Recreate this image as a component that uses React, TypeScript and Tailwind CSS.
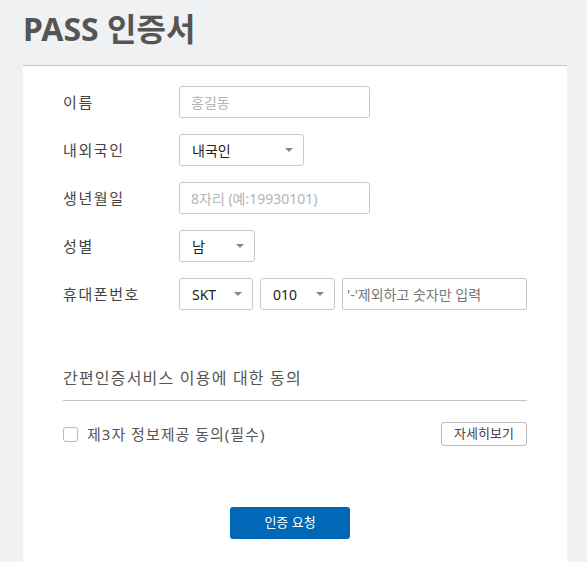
const font = { fontFamily: '"Noto Sans", "Noto Sans CJK KR", sans-serif' };

function Caret() {
  return (
    <span className="ml-auto h-0 w-0 border-x-[4px] border-t-[4px] border-x-transparent border-t-[#888]" />
  );
}

function Select({ value, width }: { value: string; width: string }) {
  return (
    <div
      className={`flex h-[32px] ${width} shrink-0 items-center rounded-[3px] border border-[#c8c8cc] bg-white pl-[12px] pr-[10px] text-[14px] text-[#222]`}
    >
      <span>{value}</span>
      <Caret />
    </div>
  );
}

function TextInput({ placeholder, width }: { placeholder: string; width: string }) {
  return (
    <input
      placeholder={placeholder}
      className={`h-[32px] ${width} shrink-0 rounded-[3px] border border-[#c8c8cc] bg-white px-[11px] text-[14px] text-[#222] outline-none placeholder:text-[#b4b4b8]`}
    />
  );
}

function Row({ label, children }: { label: string; children: React.ReactNode }) {
  return (
    <div className="flex items-center">
      <span className="w-[116px] shrink-0 text-[15px] tracking-[1.6px] text-[#444]">{label}</span>
      <div className="flex items-center gap-[7px]">{children}</div>
    </div>
  );
}

export default function App() {
  return (
    <div className="h-[562px] overflow-hidden bg-[#f0f1f3] pl-[23px] pr-[20px] pt-[9px]" style={font}>
      <h1 className="text-[32px] font-bold leading-[40px] text-[#555]">PASS 인증서</h1>
      <div className="mt-[16px] h-[520px] border-t border-[#c4c4ca] bg-white px-[40px] pt-[20px]">
        <div className="flex flex-col gap-[16px]">
          <Row label="이름">
            <TextInput placeholder="홍길동" width="w-[191px]" />
          </Row>
          <Row label="내외국인">
            <Select value="내국인" width="w-[125px]" />
          </Row>
          <Row label="생년월일">
            <TextInput placeholder="8자리 (예:19930101)" width="w-[191px]" />
          </Row>
          <Row label="성별">
            <Select value="남" width="w-[76px]" />
          </Row>
          <Row label="휴대폰번호">
            <Select value="SKT" width="w-[74px]" />
            <Select value="010" width="w-[75px]" />
            <input
              placeholder="'-'제외하고 숫자만 입력"
              className="h-[32px] w-[185px] shrink-0 rounded-[2px] border border-[#c8c8cc] bg-white px-[4px] text-[14px] text-[#222] outline-none placeholder:text-[#777]"
            />
          </Row>
        </div>

        <div className="mt-[56px] border-b border-[#c4c4ca] pb-[10px] text-[16px] tracking-[1.2px] text-[#555]">
          간편인증서비스 이용에 대한 동의
        </div>

        <div className="mt-[21px] flex items-center">
          <span className="h-[15px] w-[15px] rounded-[3px] border border-[#bbb] bg-white" />
          <span className="ml-[9px] text-[15px] tracking-[1px] text-[#555]">제3자 정보제공 동의(필수)</span>
          <button className="ml-auto h-[24px] w-[86px] rounded-[3px] border border-[#bbb] bg-white text-[13px] text-[#444]">
            자세히보기
          </button>
        </div>

        <div className="mt-[61px] flex justify-center pr-[10px]">
          <button className="h-[32px] w-[120px] rounded-[3px] bg-[#0068b7] text-[13px] text-white">
            인증 요청
          </button>
        </div>
      </div>
    </div>
  );
}
